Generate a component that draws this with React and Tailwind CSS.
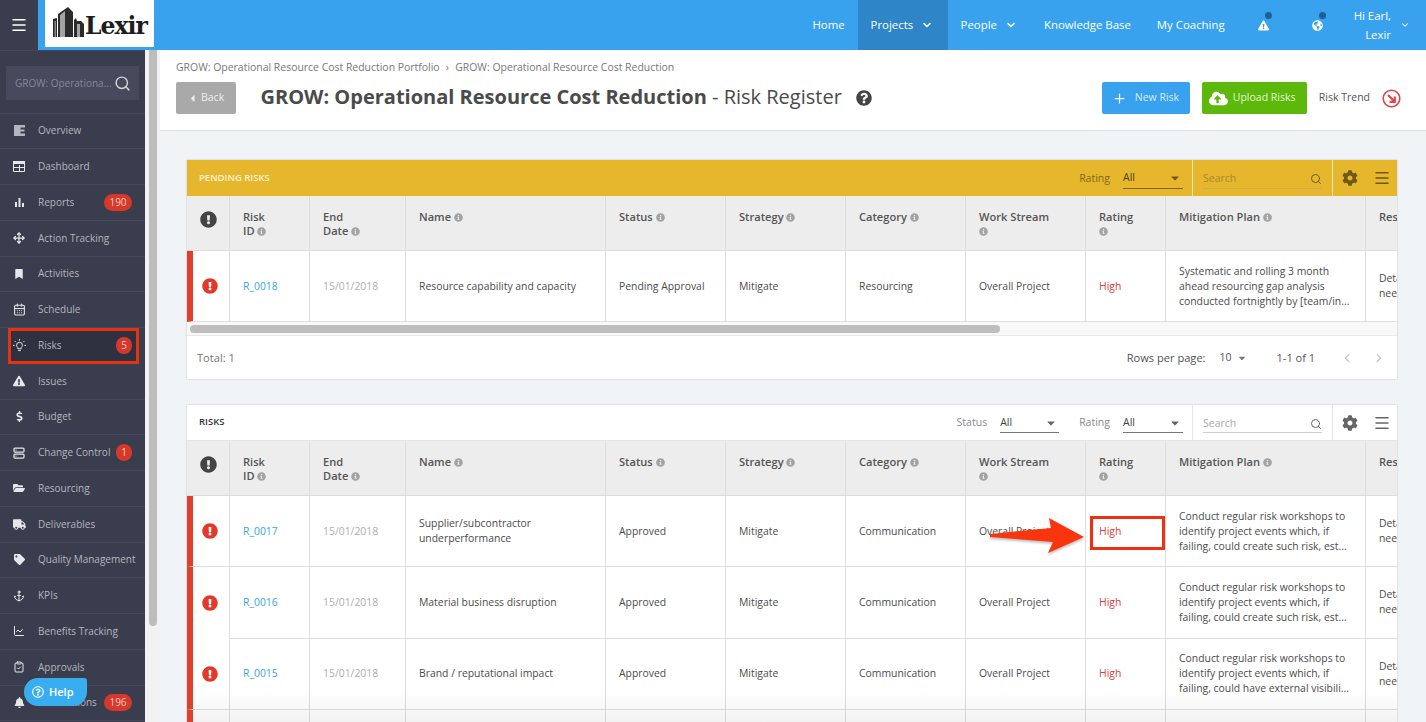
import { ChevronDown, ChevronLeft, ChevronRight, Plus, Search, Menu, Anchor, CalendarDays, ClipboardCheck, ChartLine, Move, Server } from "lucide-react";
import { FaBell, FaBookmark, FaCloudUploadAlt, FaCog, FaDollarSign, FaExclamationCircle, FaExclamationTriangle, FaFolderOpen, FaGlobeAmericas, FaInfoCircle, FaQuestionCircle, FaRegQuestionCircle, FaTag, FaTruck, FaCaretDown, FaCaretLeft } from "react-icons/fa";

const openSans = "font-['Open_Sans','Liberation_Sans',sans-serif]";

function OverviewIcon() {
  return (
    <svg width="11" height="11" viewBox="0 0 11 11" className="text-[#b4b6bf]" fill="currentColor">
      <path d="M0 0h11v2.4H6.5v2h4v2h-4v2.2H11V11H0z" />
    </svg>
  );
}

function DashboardIcon() {
  return (
    <svg width="12" height="11" viewBox="0 0 12 11" fill="none" stroke="currentColor">
      <path d="M0 0h12v3H0z" fill="currentColor" stroke="none" />
      <path d="M.5 2.5v8h11v-8M.5 6.5h11M6.5 4v6.5" />
    </svg>
  );
}

function BarsIcon() {
  return (
    <svg width="9" height="9" viewBox="0 0 9 9" fill="currentColor">
      <path d="M0 4h2v5H0zM3.5 0h2v9h-2zM7 5h2v4H7z" />
    </svg>
  );
}

function BulbIcon() {
  return (
    <svg width="13" height="13" viewBox="0 0 13 13" fill="none" stroke="currentColor" strokeWidth="1">
      <path d="M4.8 8.6C3.8 7.8 3.6 6.9 3.6 6.2a2.9 2.9 0 015.8 0c0 .7-.2 1.6-1.2 2.4v1.2H4.8zM5.2 11.6h2.6" />
      <path d="M6.5 0v1.6M1.6 2l1 1M11.4 2l-1 1M0 6.4h1.6M11.4 6.4H13" />
    </svg>
  );
}

const navItems = [
  { label: "Overview", icon: <OverviewIcon /> },
  { label: "Dashboard", icon: <DashboardIcon /> },
  { label: "Reports", icon: <BarsIcon />, badge: "190" },
  { label: "Action Tracking", icon: <Move size={12} strokeWidth={2.5} /> },
  { label: "Activities", icon: <FaBookmark size={10} /> },
  { label: "Schedule", icon: <CalendarDays size={13} /> },
  { label: "Risks", icon: <BulbIcon />, badge: "5", active: true },
  { label: "Issues", icon: <FaExclamationTriangle size={12} /> },
  { label: "Budget", icon: <FaDollarSign size={11} /> },
  { label: "Change Control", icon: <Server size={12} strokeWidth={2.5} />, badge: "1" },
  { label: "Resourcing", icon: <FaFolderOpen size={12} /> },
  { label: "Deliverables", icon: <FaTruck size={13} /> },
  { label: "Quality Management", icon: <FaTag size={11} /> },
  { label: "KPIs", icon: <Anchor size={12} /> },
  { label: "Benefits Tracking", icon: <ChartLine size={12} /> },
  { label: "Approvals", icon: <ClipboardCheck size={12} /> },
  { label: "Notifications", icon: <FaBell size={11} />, badge: "196" },
];

const columns = [
  { label: "Risk", second: "ID" },
  { label: "End", second: "Date" },
  { label: "Name" },
  { label: "Status" },
  { label: "Strategy" },
  { label: "Category" },
  { label: "Work Stream", infoBelow: true },
  { label: "Rating", infoBelow: true },
  { label: "Mitigation Plan" },
];

const gridCols = "grid-cols-[43px_80px_96px_200px_120px_120px_120px_120px_80px_200px_120px]";

const pendingRows = [
  {
    id: "R_0018", date: "15/01/2018", name: "Resource capability and capacity", status: "Pending Approval", strategy: "Mitigate",
    category: "Resourcing", stream: "Overall Project", plan: "Systematic and rolling 3 month ahead resourcing gap analysis conducted fortnightly by [team/in...",
  },
];

const riskRows = [
  {
    id: "R_0017", date: "15/01/2018", name: "Supplier/subcontractor underperformance", status: "Approved", strategy: "Mitigate",
    category: "Communication", stream: "Overall Project", plan: "Conduct regular risk workshops to identify project events which, if failing, could create such risk, est...",
  },
  {
    id: "R_0016", date: "15/01/2018", name: "Material business disruption", status: "Approved", strategy: "Mitigate", flush: true,
    category: "Communication", stream: "Overall Project", plan: "Conduct regular risk workshops to identify project events which, if failing, could create such risk, est...",
  },
  {
    id: "R_0015", date: "15/01/2018", name: "Brand / reputational impact", status: "Approved", strategy: "Mitigate",
    category: "Communication", stream: "Overall Project", plan: "Conduct regular risk workshops to identify project events which, if failing, could have external visibili...",
  },
];

function Info() {
  return <FaInfoCircle className="inline-block text-[#a3a3a3] align-[-0.5px]" size={9} />;
}

function HeaderRow() {
  return (
    <div className={`grid ${gridCols} h-[55px] bg-[#ededed] text-[11.1px] leading-[14px] font-semibold text-[#555] border-b border-[#dcdcdc]`}>
      <div className="flex justify-center pt-[15px] pl-[1px] border-r border-[#dcdcdc]">
        <FaExclamationCircle size={17} className="text-[#444]" />
      </div>
      {columns.map((col) => (
        <div key={col.label} className="pl-[13px] pt-[14px] border-r border-[#dcdcdc]">
          {col.label}
          {col.second ? (
            <>
              <br />
              {col.second} <Info />
            </>
          ) : col.infoBelow ? (
            <div><Info /></div>
          ) : (
            <> <Info /></>
          )}
        </div>
      ))}
      <div className="pl-[13px] pt-[14px]">Res</div>
    </div>
  );
}

function DataRow({ row, height }) {
  const cell = "flex items-center pl-[13px] pr-2 border-r border-b border-[#dedede]";
  return (
    <div className={`grid ${gridCols} ${height} bg-white text-[10.4px] leading-[15px] text-[#4c4c4c]`}>
      <div className={`flex items-center justify-center border-l-[6px] border-l-[#e0402b] border-r border-r-[#dedede] pr-[2px] ${row.flush ? "" : "border-b border-b-[#dedede]"}`}>
        <FaExclamationCircle size={16} className="text-[#e3392a]" />
      </div>
      <div className={`${cell} text-[#38a5dc]`}>{row.id}</div>
      <div className={`${cell} text-[#aeaeae]`}>{row.date}</div>
      <div className={cell}>{row.name}</div>
      <div className={cell}>{row.status}</div>
      <div className={cell}>{row.strategy}</div>
      <div className={cell}>{row.category}</div>
      <div className={cell}>{row.stream}</div>
      <div className={`${cell} text-[#d94040]`}>High</div>
      <div className={cell}>{row.plan}</div>
      <div className="flex items-center pl-[13px] border-b border-[#dedede] whitespace-pre">{"Details\nneeded"}</div>
    </div>
  );
}

function FilterSelect({ label, tone, width }) {
  return (
    <div className="flex items-center">
      <span className={`text-[10.5px] mr-[13px] mt-[1px] ${tone.label}`}>{label}</span>
      <div className={`${width} h-[21px] border-b ${tone.line} ${tone.valuePad} flex items-center justify-between text-[10.5px] ${tone.value}`}>
        <span>All</span>
        <FaCaretDown size={12} className={`${tone.caret} mr-0.5`} />
      </div>
    </div>
  );
}

function Toolbar({ title, filters, tone }) {
  return (
    <div className={`flex h-[36px] items-stretch pl-3 ${tone.bg}`}>
      <div className={`flex-1 flex items-center text-[9.5px] font-semibold ${tone.title}`}>{title}</div>
      <div className="flex items-center gap-[20px] pr-[9px]">
        {filters.map((f) => (
          <FilterSelect key={f} label={f} tone={tone} width={f === "Status" ? "w-[59px]" : "w-[60px]"} />
        ))}
      </div>
      <div className={`w-[141px] border-l border-r ${tone.divider} flex items-center px-[10px]`}>
        <div className={`flex-1 h-[21px] flex items-center justify-between border-b ${tone.searchLine} ${tone.searchPad}`}>
          <span className={`text-[10.5px] ${tone.placeholder}`}>Search</span>
          <Search size={12} className={tone.icon} />
        </div>
      </div>
      <div className={`w-[64px] flex items-center justify-between pl-[9px] pr-[6px] ${tone.icon}`}>
        <FaCog size={16} />
        <Menu size={18} />
      </div>
    </div>
  );
}

const yellowTone = {
  bg: "bg-[#e6b62d]", title: "text-[#fdf4d6]", label: "text-[#7f6a20]", value: "text-[#4f4214]", line: "border-[#7f6514]", caret: "text-[#6f5a14]",
  divider: "border-[#f6e6b4]", searchLine: "border-[#d0ad4c]", placeholder: "text-[#a58a2e]", icon: "text-[#6e5a16]",
  valuePad: "", searchPad: "pt-[2px]",
};

const whiteTone = {
  bg: "bg-white border-b border-[#e5e5e5]", title: "text-[#333]", label: "text-[#888]", value: "text-[#444]", line: "border-[#777]", caret: "text-[#666]",
  divider: "border-[#e5e5e5]", searchLine: "border-[#cfcfcf]", placeholder: "text-[#aaa]", icon: "text-[#666]",
  valuePad: "pt-[2px]", searchPad: "pt-[4px]",
};

function Logo() {
  return (
    <div className="flex items-center h-[47px] w-[109px] bg-white pl-[8px] ml-[7px] overflow-hidden">
      <svg width="31" height="30" viewBox="0 0 31 30" className="shrink-0 -mt-[3px]">
        <path d="M0 30V12l4-1v19zM5 30V7l10-7 5 5v25zM21 30V13l2-2 1 3h4l3 3v13z" fill="#2b2b2b" />
        <path d="M7 30V8l5-4v26zM24 30V17h3v13z" fill="#a3a3a3" />
        <path d="M1.5 30V14h1.5v16z" fill="#8a8a8a" />
      </svg>
      <span className="font-['DejaVu_Serif',serif] font-bold text-[23.5px] leading-none text-[#1d1d1d] tracking-[-1px] ml-[1px] mt-[7px]">Lexir</span>
    </div>
  );
}

function TopBar() {
  return (
    <div className="flex h-[50px] bg-[#38a2ef] text-white text-[11.4px] shrink-0">
      <div className="w-[38px] bg-[#393d4e] flex items-center justify-center">
        <Menu size={18} />
      </div>
      <Logo />
      <div className="flex-1 flex items-center justify-end">
        <span className="mr-[13px]">Home</span>
        <div className="w-[90px] h-full bg-[#2e86c8] flex items-center pl-[13px]">
          Projects
          <ChevronDown size={12} strokeWidth={3} className="ml-[8px]" />
        </div>
        <div className="flex items-center ml-[13px]">
          People
          <ChevronDown size={12} strokeWidth={3} className="ml-[8px]" />
        </div>
        <span className="ml-[27px]">Knowledge Base</span>
        <span className="ml-[26px]">My Coaching</span>
        <div className="relative ml-[33px]">
          <FaExclamationTriangle size={11} />
          <span className="absolute -top-[8px] left-[7px] w-[7px] h-[7px] rounded-full bg-[#1e5f94]" />
        </div>
        <div className="relative ml-[43px]">
          <FaGlobeAmericas size={11} />
          <span className="absolute -top-[8px] left-[7px] w-[7px] h-[7px] rounded-full bg-[#1e5f94]" />
        </div>
        <div className="ml-[31px] text-right leading-[19px]">
          Hi Earl,
          <br />
          Lexir
        </div>
        <ChevronDown size={10} strokeWidth={2.5} className="ml-[9px] mr-[16px]" />
      </div>
    </div>
  );
}

function Sidebar() {
  return (
    <aside className="w-[145px] shrink-0 bg-[#393d4e] text-[#b4b6bf] text-[10px] flex flex-col">
      <div className="h-[63.5px] shrink-0 pt-[15px] px-[6px] border-y border-[#44485a]">
        <div className="h-[34px] bg-[#474a5c] flex items-center pl-[9px] pr-[8px] justify-between text-[#85889a]">
          <span className="whitespace-nowrap">GROW: Operationa...</span>
          <Search size={17} className="text-[#d5d6dc] shrink-0" />
        </div>
      </div>
      {navItems.map((item) => (
        <div
          key={item.label}
          className={`relative h-[35.75px] shrink-0 flex items-center whitespace-nowrap ${item.active ? "bg-[#2e3140] outline-[3px] outline-[#e8310f] -outline-offset-[3px] ml-[8px] mr-[6px] pl-[30px] pr-[7px]" : "border-b border-[#44485a] pl-[38px] pr-[13px]"}`}
        >
          <span className={`absolute top-0 bottom-0 flex items-center justify-center w-[20px] text-[#e6e7ea] ${item.active ? "left-[1px]" : "left-[9px]"}`}>
            {item.icon}
          </span>
          <span className="flex-1">{item.label}</span>
          {item.badge ? (
            <span className={`h-[17px] rounded-full bg-[#d6392a] text-[#f4c9c3] flex items-center justify-center ${item.badge.length > 1 ? "w-[28px]" : "w-[16px]"}`}>
              {item.badge}
            </span>
          ) : null}
        </div>
      ))}
    </aside>
  );
}

function PageHeader() {
  return (
    <div className="h-[81px] shrink-0 bg-white border-b border-[#dde1e4] pl-[16px] pr-[25px] pt-[10px]">
      <div className="text-[10.45px] leading-[14px] text-[#777]">
        GROW: Operational Resource Cost Reduction Portfolio <span className="mx-[3.5px]">›</span> GROW: Operational Resource Cost Reduction
      </div>
      <div className="flex items-center mt-[8px]">
        <button className="w-[60px] h-[32px] bg-[#a9a9a9] rounded-[2px] text-[#eee] text-[10.5px] flex items-center pl-[11px]">
          <FaCaretLeft size={11} className="mr-[3px]" />
          Back
        </button>
        <h1 className="ml-[24.5px] -mt-[2px] text-[20px] text-[#4a4a4a] font-bold whitespace-nowrap">
          GROW: Operational Resource Cost Reduction <span className="font-normal">- Risk Register</span>
        </h1>
        <FaQuestionCircle size={16} className="ml-[14px] text-[#444]" />
        <div className="flex-1" />
        <button className="w-[88px] h-[32px] bg-[#38a2ef] rounded-[2px] text-[#d5edfc] text-[10.5px] flex items-center pl-[10px]">
          <Plus size={15} className="mr-[8px] text-white" />
          New Risk
        </button>
        <button className="ml-[12px] w-[105px] h-[32px] bg-[#5cb80a] rounded-[2px] text-[#e6f6d5] text-[10.5px] flex items-center pl-[7px]">
          <FaCloudUploadAlt size={19} className="mr-[5px] text-white" />
          Upload Risks
        </button>
        <span className="ml-[12px] text-[10.5px] text-[#555]">Risk Trend</span>
        <svg width="19" height="19" viewBox="0 0 19 19" className="ml-[12px]" fill="none" stroke="#e0464c">
          <circle cx="9.5" cy="9.5" r="8.3" strokeWidth="1.6" />
          <path d="M6 6l6 6M12.8 7.5v5.3H7.5" strokeWidth="2.2" />
        </svg>
      </div>
    </div>
  );
}

function Footer() {
  return (
    <div className="h-[43px] flex items-center pl-[10px] pt-[1px] text-[11.1px] text-[#777]">
      <span className="flex-1">Total: 1</span>
      <span className="text-[#555]">Rows per page:</span>
      <span className="ml-[14px] text-[#555] text-[10.5px]">10</span>
      <FaCaretDown size={10} className="ml-[5px] text-[#777]" />
      <span className="ml-[30px] text-[#555] text-[11px]">1-1 of 1</span>
      <ChevronLeft size={14} className="ml-[25px] text-[#c4c4c4]" />
      <ChevronRight size={14} className="ml-[18px] mr-[11px] text-[#c4c4c4]" />
    </div>
  );
}

export default function App() {
  return (
    <div className={`${openSans} relative w-full h-screen overflow-hidden flex flex-col bg-[#f0f4f7]`}>
      <TopBar />
      <div className="flex flex-1 min-h-0">
        <Sidebar />
        <div className="w-[15px] shrink-0 bg-[#f2f2f2] pl-[4px]">
          <div className="w-[8px] h-[576px] bg-[#bdbdbd] rounded-b-[4px]" />
        </div>
        <main className="flex-1 min-w-0 flex flex-col">
          <PageHeader />
          <div className="pl-[27px] pr-[29px] pt-[29px] flex flex-col gap-[26px]">
            <section className="bg-white shadow-[0_0_2px_rgba(0,0,0,0.2)] overflow-hidden shrink-0">
              <Toolbar title="PENDING RISKS" filters={["Rating"]} tone={yellowTone} />
              <HeaderRow />
              {pendingRows.map((row) => (
                <DataRow key={row.id} row={row} height="h-[71px]" />
              ))}
              <div className="h-[14px] bg-[#f8f8f8] border-b border-[#e8e8e8] pt-[3px] pl-[3px]">
                <div className="w-[810px] h-[8px] rounded-full bg-[#bdbdbd]" />
              </div>
              <Footer />
            </section>
            <section className="bg-white shadow-[0_0_2px_rgba(0,0,0,0.2)] overflow-hidden shrink-0">
              <Toolbar title="RISKS" filters={["Status", "Rating"]} tone={whiteTone} />
              <HeaderRow />
              {riskRows.map((row) => (
                <DataRow key={row.id} row={row} height="h-[71.3px]" />
              ))}
              <div className={`grid ${gridCols} h-[71px] bg-white`}>
                <div className="border-l-[6px] border-l-[#e0402b] border-r border-r-[#dedede]" />
                {columns.map((col) => (
                  <div key={col.label} className="border-r border-[#dedede]" />
                ))}
              </div>
            </section>
          </div>
        </main>
      </div>

      {/* soft fade at the page bottom */}
      <div className="absolute left-[193px] top-[690px] w-[1204px] h-[32px] bg-gradient-to-b from-transparent to-black/[0.05] pointer-events-none" />

      {/* annotation arrow and box */}
      <div className="absolute left-[1090px] top-[516px] w-[75px] h-[34px] border-[3px] border-[#ee3211]" />
      <svg className="absolute left-[988px] top-[516px] drop-shadow-[0_2px_1px_rgba(0,0,0,0.25)]" width="98" height="40" viewBox="0 0 98 40">
        <path d="M2 18L63 12 61 2 96 21 60 37 65 26 2 21z" fill="#f9350e" />
      </svg>

      <div className="absolute left-[24px] top-[678px] w-[63px] h-[28px] bg-[#38aef0] rounded-[14px] rounded-tr-[3px] flex items-center pl-[8px] text-white text-[11px] font-semibold">
        <FaRegQuestionCircle size={12} className="mr-[5px]" />
        Help
      </div>
    </div>
  );
}
